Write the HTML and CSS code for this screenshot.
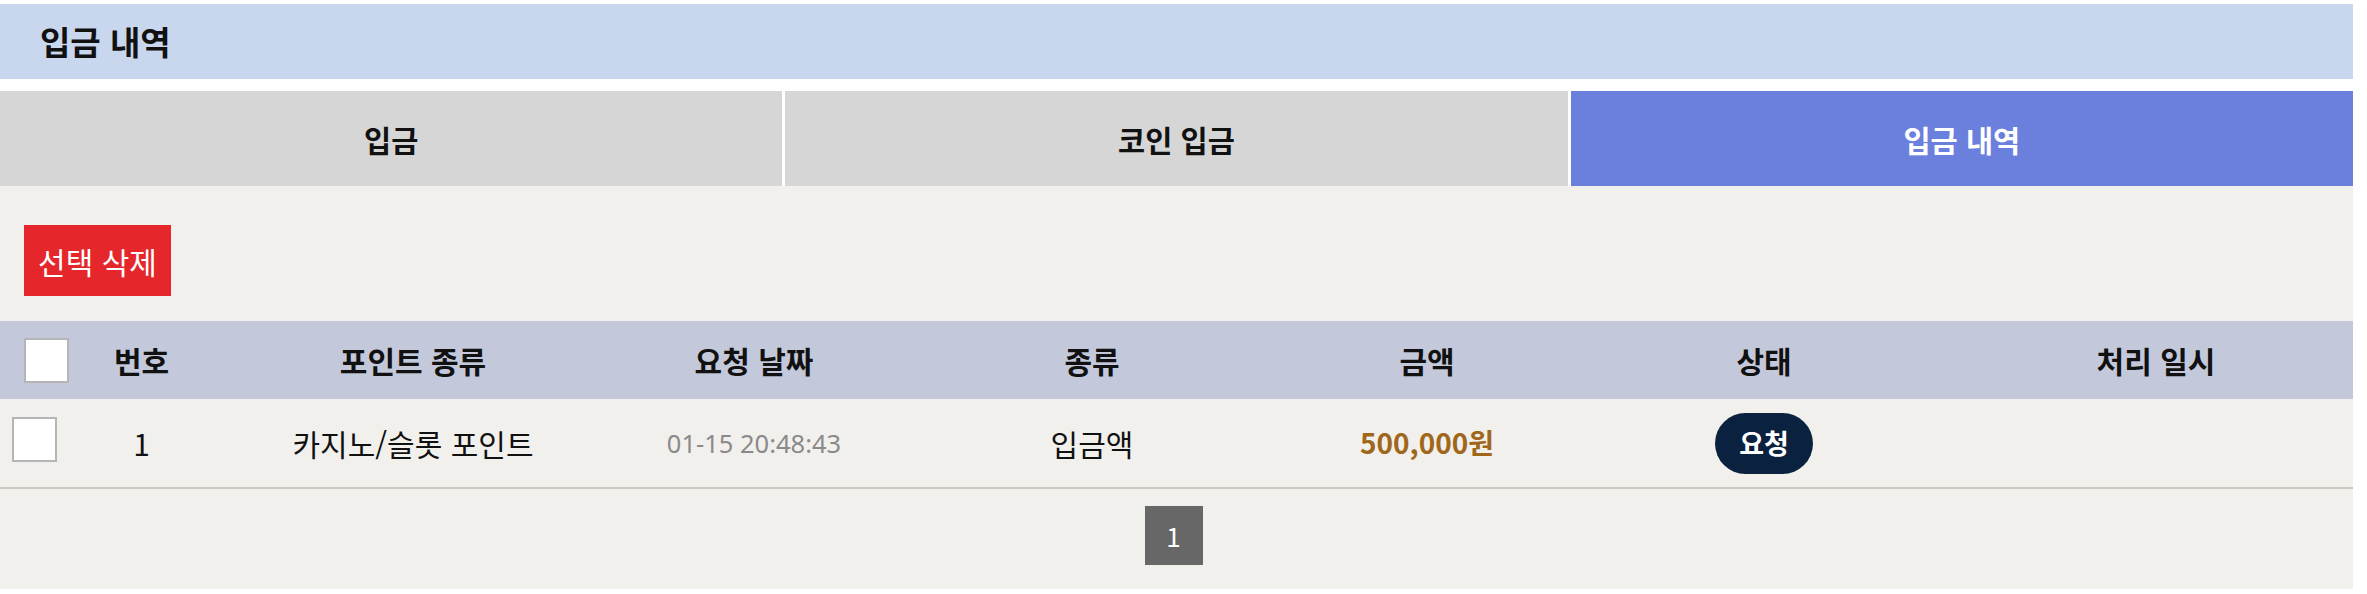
FILE: index.html
```html
<!DOCTYPE html>
<html lang="ko">
<head>
<meta charset="utf-8">
<title>입금 내역</title>
<link rel="stylesheet" href="styles.css">
</head>
<body>
<div class="page">
  <div class="title-bar"><h2 class="title">입금 내역</h2></div>
  <nav class="tabs">
    <a class="tab">입금</a>
    <a class="tab">코인 입금</a>
    <a class="tab tab-active">입금 내역</a>
  </nav>
  <section class="content">
    <div class="toolbar"><button class="btn-delete">선택 삭제</button></div>
    <div class="table">
      <div class="row row-head">
        <div class="cell cell-check head-check"><input type="checkbox" class="check"></div>
        <div class="cell">번호</div>
        <div class="cell">포인트 종류</div>
        <div class="cell">요청 날짜</div>
        <div class="cell">종류</div>
        <div class="cell">금액</div>
        <div class="cell">상태</div>
        <div class="cell">처리 일시</div>
      </div>
      <div class="row row-body">
        <div class="cell cell-check body-check"><input type="checkbox" class="check"></div>
        <div class="cell">1</div>
        <div class="cell">카지노/슬롯 포인트</div>
        <div class="cell cell-date">01-15 20:48:43</div>
        <div class="cell">입금액</div>
        <div class="cell cell-amount">500,000원</div>
        <div class="cell"><span class="badge">요청</span></div>
        <div class="cell"></div>
      </div>
    </div>
    <div class="pagination"><a class="page-btn">1</a></div>
  </section>
</div>
</body>
</html>
```
FILE: styles.css
```css
html, body {
  margin: 0;
  padding: 0;
  background: #ffffff;
}

body {
  font-family: "Noto Sans CJK KR", "Noto Sans", sans-serif;
  color: #111111;
}

.page {
  width: 2353px;
  padding-top: 4px;
}

.title-bar {
  height: 75px;
  background: #c8d7ed;
  display: flex;
  align-items: center;
  padding-left: 40px;
  box-sizing: border-box;
}

.title {
  margin: 0;
  font-size: 33px;
  font-weight: 700;
  line-height: 1;
  color: #111111;
}

.tabs {
  margin-top: 12px;
  display: grid;
  grid-template-columns: repeat(3, 1fr);
  column-gap: 3px;
  height: 95px;
}

.tab {
  display: flex;
  align-items: center;
  justify-content: center;
  background: #d6d6d6;
  font-size: 29.5px;
  font-weight: 700;
  color: #111111;
}

.tab-active {
  background: #6b80dd;
  color: #ffffff;
}

.content {
  background: #f1f0ec;
  padding: 39px 0 24px;
}

.toolbar {
  padding-left: 24px;
  margin-bottom: 25px;
}

.btn-delete {
  width: 147px;
  height: 71px;
  padding: 0;
  background: #e5262a;
  color: #ffffff;
  border: 0;
  font-family: inherit;
  font-size: 30px;
  font-weight: 400;
  line-height: 1;
  white-space: nowrap;
}

.row {
  display: grid;
  grid-template-columns: 66px 151px 392px 290px 386px 284px 390px 394px;
  align-items: center;
}

.row-head {
  height: 78px;
  background: #c3c9db;
  font-size: 30px;
  font-weight: 700;
}

.row-body {
  height: 88px;
  border-bottom: 2px solid #c9c7c1;
  font-size: 30px;
  font-weight: 400;
}

.cell {
  text-align: center;
  line-height: 1.2;
  white-space: nowrap;
}

.cell-check {
  display: flex;
  text-align: left;
}

.head-check {
  padding-left: 24px;
}

.body-check {
  padding-left: 12px;
  align-self: start;
  padding-top: 18px;
}

.check {
  appearance: none;
  -webkit-appearance: none;
  width: 45px;
  height: 45px;
  margin: 0;
  box-sizing: border-box;
  border: 2px solid #b5b5b5;
  background: #ffffff;
  flex: none;
}

.cell-date {
  color: #8a8a8a;
  font-family: "Noto Sans", "Noto Sans CJK KR", sans-serif;
  font-size: 25.5px;
}

.cell-amount {
  color: #a0671b;
  font-size: 28px;
  font-weight: 700;
}

.badge {
  display: inline-flex;
  align-items: center;
  justify-content: center;
  height: 61px;
  padding: 0 24px;
  border-radius: 31px;
  background: #0a2240;
  color: #ffffff;
  font-size: 27px;
  font-weight: 700;
}

.pagination {
  margin-top: 17px;
  padding-right: 6px;
  display: flex;
  justify-content: center;
}

.page-btn {
  width: 58px;
  height: 59px;
  display: flex;
  align-items: center;
  justify-content: center;
  background: #676767;
  color: #ffffff;
  font-size: 26px;
}
```
